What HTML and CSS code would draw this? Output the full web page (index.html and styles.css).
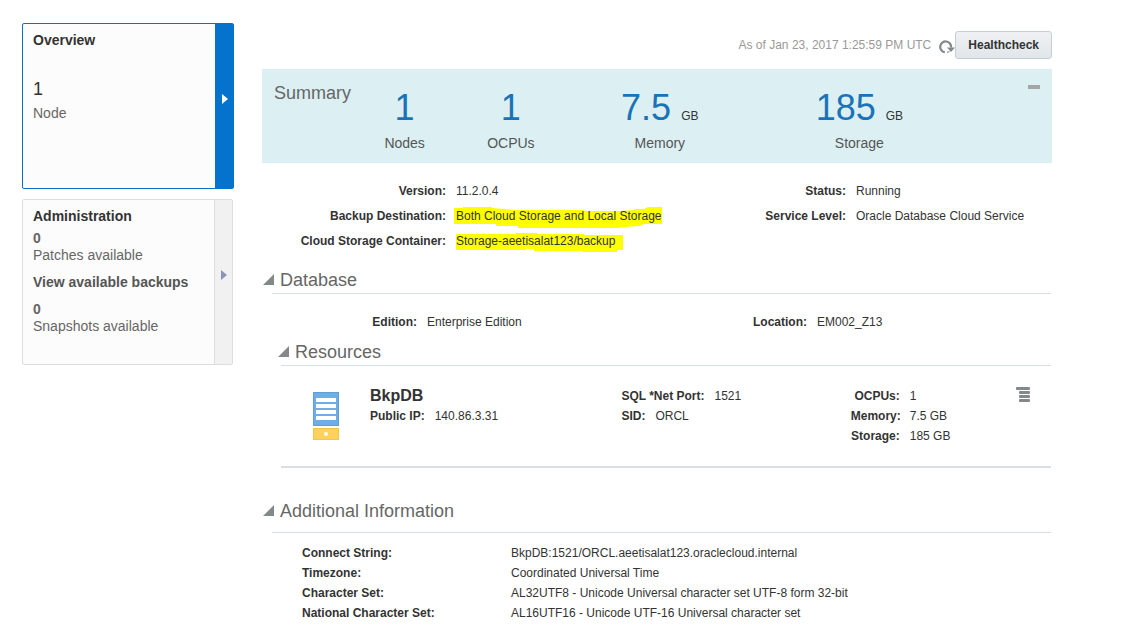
FILE: index.html
```html
<!DOCTYPE html>
<html lang="en">
<head>
<meta charset="utf-8">
<title>Database Service Overview</title>
<link rel="stylesheet" href="styles.css">
</head>
<body>
<div class="page">
  <nav class="sidebar" aria-label="Service sections">
    <section class="card card-active">
      <div class="card-body">
        <h2 class="card-title">Overview</h2>
        <div class="node-count">1</div>
        <div class="card-text">Node</div>
      </div>
      <button class="card-strip" type="button" aria-label="Open Overview">
        <svg class="arrow" width="6" height="10" viewBox="0 0 6 10"><path d="M0 0 6 5 0 10Z" fill="currentColor"/></svg>
      </button>
    </section>
    <section class="card">
      <div class="card-body">
        <h2 class="card-title">Administration</h2>
        <div class="card-group"><strong>0</strong><br>Patches available</div>
        <a class="card-link" href="#backups">View available backups</a>
        <div class="card-group"><strong>0</strong><br>Snapshots available</div>
      </div>
      <button class="card-strip" type="button" aria-label="Open Administration">
        <svg class="arrow" width="6" height="10" viewBox="0 0 6 10"><path d="M0 0 6 5 0 10Z" fill="currentColor"/></svg>
      </button>
    </section>
  </nav>

  <main class="main">
    <div class="toolbar">
      <span class="as-of">As of Jan 23, 2017 1:25:59 PM UTC</span>
      <button class="icon-button refresh" type="button" aria-label="Refresh">
        <svg width="16" height="14" viewBox="0 0 16 14"><path d="M5.8 12.2A5.4 5.4 0 1 1 12 7.5" fill="none" stroke="#83888b" stroke-width="2.2"/><path d="M8 7.5H16L12 12Z" fill="#83888b"/><path d="M8 12.6 10.5 11.4" stroke="#a4a8aa" stroke-width="1.5"/></svg>
      </button>
      <button class="healthcheck" type="button">Healthcheck</button>
    </div>

    <section class="summary">
      <h1 class="summary-title">Summary</h1>
      <div class="stat"><div class="stat-value">1</div><div class="stat-label">Nodes</div></div>
      <div class="stat"><div class="stat-value">1</div><div class="stat-label">OCPUs</div></div>
      <div class="stat"><div class="stat-value">7.5 <small class="unit">GB</small></div><div class="stat-label">Memory</div></div>
      <div class="stat"><div class="stat-value">185 <small class="unit">GB</small></div><div class="stat-label">Storage</div></div>
      <button class="icon-button collapse" type="button" aria-label="Collapse summary">
        <svg width="12" height="4" viewBox="0 0 12 4"><path d="M0 0H12V4H0Z" fill="#a5a5a5"/></svg>
      </button>
    </section>

    <div class="facts facts-service">
      <dl class="pairs">
        <dt>Version:</dt><dd>11.2.0.4</dd>
        <dt>Backup Destination:</dt>
        <dd><span class="marked"><svg class="marker" width="209" height="24" viewBox="0 0 209 24"><path d="M0 4H9V3H38V4L62 6H130V7H167L180 6 181 5H190L194 3H208V20H190L185 22 170 23 165 24H64V22H42V20H0Z" fill="#ff0"/></svg><span class="marked-text">Both Cloud Storage and Local Storage</span></span></dd>
        <dt>Cloud Storage Container:</dt>
        <dd><span class="marked"><svg class="marker" width="169" height="24" viewBox="0 0 169 24"><path d="M2 5H62V4H83V5H130V6H169V21H163V23H128V22H80V20H72V21H2Z" fill="#ff0"/></svg><span class="marked-text">Storage-aeetisalat123/backup</span></span></dd>
      </dl>
      <dl class="pairs">
        <dt>Status:</dt><dd>Running</dd>
        <dt>Service Level:</dt><dd>Oracle Database Cloud Service</dd>
      </dl>
    </div>

    <section class="section">
      <h2 class="section-title">
        <button class="icon-button" type="button" aria-label="Toggle Database"><svg width="11" height="11" viewBox="0 0 11 11"><path d="M11 0V11H0Z" fill="#83888b"/></svg></button>
        Database
      </h2>
      <div class="facts facts-database">
        <dl class="pairs"><dt>Edition:</dt><dd>Enterprise Edition</dd></dl>
        <dl class="pairs"><dt>Location:</dt><dd>EM002_Z13</dd></dl>
      </div>
      <section class="subsection">
        <h3 class="section-title">
          <button class="icon-button" type="button" aria-label="Toggle Resources"><svg width="11" height="11" viewBox="0 0 11 11"><path d="M11 0V11H0Z" fill="#83888b"/></svg></button>
          Resources
        </h3>
        <article class="resource">
          <svg class="server" width="26" height="48" viewBox="0 0 26 48">
            <rect x=".5" y=".5" width="25" height="33" fill="#70ade6" stroke="#5f9ddb"/>
            <path d="M3 6H23V10H3ZM3 12H23V16H3ZM3 18H23V22H3ZM3 24H23V28H3Z" fill="#fff"/>
            <rect x=".5" y="36.500" width="25" height="11" fill="#fdd15c" stroke="#f3c54e"/>
            <circle cx="13" cy="42" r="2" fill="#fff"/>
          </svg>
          <div class="resource-info">
            <h4 class="resource-name">BkpDB</h4>
            <div class="inline-pair"><b>Public IP:</b><span>140.86.3.31</span></div>
          </div>
          <div class="resource-info">
            <div class="inline-pair"><b>SQL *Net Port:</b><span>1521</span></div>
            <div class="inline-pair"><b>SID:</b><span>ORCL</span></div>
          </div>
          <dl class="pairs specs">
            <dt>OCPUs:</dt><dd>1</dd>
            <dt>Memory:</dt><dd>7.5 GB</dd>
            <dt>Storage:</dt><dd>185 GB</dd>
          </dl>
          <button class="icon-button menu" type="button" aria-label="Resource actions">
            <svg width="14" height="15" viewBox="0 0 14 15"><g fill="#83888b"><rect width="14" height="3" rx="1"/><rect x="3" y="4" width="11" height="3" rx="1"/><rect x="3" y="8" width="11" height="3" rx="1"/><rect x="3" y="12" width="11" height="3" rx="1"/></g></svg>
          </button>
        </article>
      </section>
    </section>

    <section class="section additional">
      <h2 class="section-title">
        <button class="icon-button" type="button" aria-label="Toggle Additional Information"><svg width="11" height="11" viewBox="0 0 11 11"><path d="M11 0V11H0Z" fill="#83888b"/></svg></button>
        Additional Information
      </h2>
      <table class="info-table">
        <tr><th scope="row">Connect String:</th><td>BkpDB:1521/ORCL.aeetisalat123.oraclecloud.internal</td></tr>
        <tr><th scope="row">Timezone:</th><td>Coordinated Universal Time</td></tr>
        <tr><th scope="row">Character Set:</th><td>AL32UTF8 - Unicode Universal character set UTF-8 form 32-bit</td></tr>
        <tr><th scope="row">National Character Set:</th><td>AL16UTF16 - Unicode UTF-16 Universal character set</td></tr>
      </table>
    </section>
  </main>
</div>
</body>
</html>
```
FILE: styles.css
```css
* {
  box-sizing: border-box;
}

body {
  margin: 0;
  background: #fff;
  color: #333;
  font: 12px/20px "Liberation Sans", Arial, sans-serif;
}

h1, h2, h3, h4, dl, dd {
  margin: 0;
}

button {
  font-family: inherit;
  cursor: pointer;
}

.page {
  display: flex;
  gap: 28px;
  padding: 23px 69px 9px 22px;
}

.sidebar {
  flex: 0 0 212px;
  display: flex;
  flex-direction: column;
  gap: 10px;
}

.card {
  display: flex;
  min-height: 166px;
  margin-right: 1px;
  border: 1px solid #dedede;
  border-radius: 2px;
  background: #fcfcfc;
  color: #666;
  font-size: 14px;
  line-height: 17px;
}

.card-active {
  margin-right: 0;
  border-color: #0572ce;
}

.card-body {
  flex: 1;
  padding: 8px 0 8px 10px;
}

.card-title {
  color: #333;
  font-size: 14px;
  line-height: 17px;
}

.node-count {
  margin-top: 30px;
  color: #333;
  font-size: 18px;
  line-height: 20px;
}

.card-text {
  margin-top: 6px;
}

.card-group {
  margin-top: 5px;
}

.card-link {
  display: block;
  margin: 10px 0;
  color: #555;
  font-weight: bold;
  text-decoration: none;
}

.card-strip {
  display: flex;
  flex: 0 0 18px;
  align-items: center;
  justify-content: center;
  padding: 0;
  border: 0;
  border-left: 1px solid #dedede;
  background: #f1f1f1;
  color: #8d93b5;
}

.card-active .card-strip {
  border-color: #0572ce;
  background: #0572ce;
  color: #fff;
}

.arrow {
  margin-bottom: 15px;
}

.main {
  flex: 1;
  min-width: 0;
}

.toolbar {
  display: flex;
  align-items: center;
  justify-content: flex-end;
  padding: 8px 0 10px;
}

.as-of {
  color: #999;
}

.icon-button {
  display: block;
  padding: 0;
  border: 0;
  background: none;
  line-height: 0;
}

.refresh {
  margin: 4px 0 0 8px;
}

.healthcheck {
  height: 28px;
  padding: 0 12px;
  border: 1px solid #c4ced7;
  border-radius: 3px;
  background: linear-gradient(#eff1f3, #e2e6ea);
  color: #333;
  font-size: 12px;
  font-weight: bold;
}

.summary {
  display: grid;
  grid-template-columns: 84fr 108fr 106fr 194fr 208fr 90fr;
  min-height: 94px;
  background: #dcf0f4;
}

.summary-title {
  padding: 12px 0 0 12px;
  color: #666;
  font-size: 18px;
  font-weight: normal;
  line-height: 24px;
}

.stat {
  padding-top: 18px;
  text-align: center;
  white-space: nowrap;
}

.stat-value {
  color: #1a73b7;
  font-size: 36px;
  line-height: 42px;
}

.unit {
  color: #333;
  font-size: 12px;
  line-height: 1;
}

.stat-label {
  margin-top: 4px;
  color: #555;
  font-size: 14px;
  line-height: 20px;
}

.collapse {
  align-self: start;
  justify-self: end;
  margin: 16px 12px 0 0;
}

.facts {
  display: grid;
}

.facts-service {
  grid-template-columns: 400fr 390fr;
  padding-top: 16px;
  line-height: 25px;
}

.facts-service .pairs {
  grid-template-columns: 184px 1fr;
}

.facts-database {
  grid-template-columns: 390fr 400fr;
  padding: 18px 0 9px;
}

.facts-database .pairs {
  grid-template-columns: 155px 1fr;
}

.pairs {
  display: grid;
  column-gap: 10px;
  align-content: start;
  white-space: nowrap;
}

dt {
  font-weight: bold;
  text-align: right;
}

/* Hand-drawn highlighter stroke behind a value */
.marked {
  display: block;
  position: relative;
}

.marker {
  position: absolute;
  top: 0;
  left: -2px;
}

.marked-text {
  position: relative;
}

.section {
  padding-top: 15px;
}

.section-title {
  display: flex;
  align-items: center;
  gap: 6px;
  margin-right: 1px;
  padding: 0 0 3px 1px;
  background: linear-gradient(#d6dfe6, #d6dfe6) 10px 100% / 100% 1px no-repeat;
  color: #666;
  font-size: 18px;
  font-weight: normal;
  line-height: 22px;
}

.section-title .icon-button {
  margin-bottom: 2px;
}

.subsection {
  margin-left: 15px;
}

.subsection .section-title {
  background-position: 4px 100%;
}

.resource {
  display: grid;
  grid-template-columns: 57px 251fr 229fr 165fr 14px;
  margin: 0 1px 0 4px;
  padding: 20px 21px 20px 32px;
  border-bottom: 2px solid #d9e0e5;
}

.server {
  margin-top: 6px;
}

.resource-name {
  font-size: 16px;
  line-height: 20px;
}

.inline-pair {
  display: flex;
  gap: 10px;
}

.specs {
  grid-template-columns: 49px 1fr;
}

.menu {
  align-self: start;
  margin-top: 1px;
}

.additional {
  padding-top: 32px;
}

.additional .section-title {
  padding-bottom: 11px;
}

.info-table {
  margin: 10px 0 0 40px;
  border-collapse: collapse;
}

.info-table th,
.info-table td {
  padding: 0;
  text-align: left;
}

.info-table th {
  width: 209px;
}
```
